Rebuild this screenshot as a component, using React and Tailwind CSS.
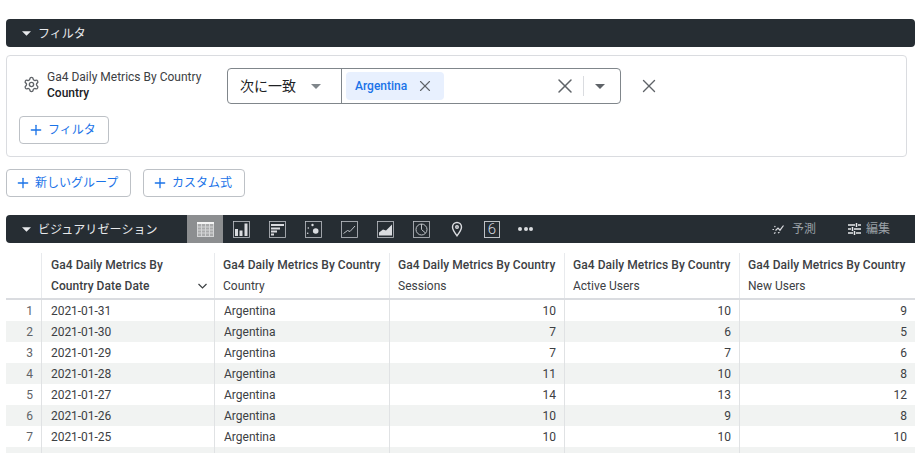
// App.jsx — Explore filter panel and results table.

import { Plus, Settings, X } from 'lucide-react';

const ROWS = [
  ['2021-01-31', 10, 10, 9],
  ['2021-01-30', 7, 6, 5],
  ['2021-01-29', 7, 7, 6],
  ['2021-01-28', 11, 10, 8],
  ['2021-01-27', 14, 13, 12],
  ['2021-01-26', 10, 9, 8],
  ['2021-01-25', 10, 10, 10],
];

const COLUMNS = [
  { title: 'Ga4 Daily Metrics By Country', sub: 'Country' },
  { title: 'Ga4 Daily Metrics By Country', sub: 'Sessions' },
  { title: 'Ga4 Daily Metrics By Country', sub: 'Active Users' },
  { title: 'Ga4 Daily Metrics By Country', sub: 'New Users' },
];

const GRID = 'grid grid-cols-[35px_173px_175px_175px_175px_176px]';

function Caret({ className }) {
  return (
    <svg width="10" height="5" viewBox="0 0 10 5" className={className}>
      <path d="M0 0h10L5 5z" fill="currentColor" />
    </svg>
  );
}

function OutlineButton({ label, className }) {
  return (
    <button className={`flex h-7 items-center rounded border border-[#bdc1c6] bg-white pl-2 text-xs text-[#1a73e8] ${className}`}>
      <Plus size={16} strokeWidth={2} className="mr-1" />
      {label}
    </button>
  );
}

function VisIcon({ children }) {
  return (
    <svg width="17" height="17" viewBox="0 0 17 17" fill="none" stroke="#bdc1c6" className="shrink-0">
      <rect x="0.5" y="0.5" width="16" height="16" strokeWidth="0.8" />
      {children}
    </svg>
  );
}

function Toolbar() {
  return (
    <div className="flex items-center text-[#dadce0]">
      <div className="flex h-7 w-9 items-center justify-center bg-[#8c8e90]">
        <svg width="17" height="15" viewBox="0 0 17 15" fill="none" stroke="#d4d5d6" strokeWidth="1">
          <rect x="0.5" y="0.5" width="16" height="14" fill="#a9aaab" />
          <rect x="0" y="0" width="17" height="2" fill="#f4f4f4" stroke="none" />
          <path d="M0 5h17M0 8h17M0 11h17M4.5 2v13M8.5 2v13M12.5 2v13" />
        </svg>
      </div>
      <div className="ml-[10px] flex items-center gap-[19px]">
        <VisIcon>
          <path d="M3.500 15V8M8 15V9.500M13 15V2.500" stroke="#dadce0" strokeWidth="3" />
        </VisIcon>
        <VisIcon>
          <path d="M2 4h13M2 7.500h9M2 10.500h6M2 13.500h3" stroke="#dadce0" strokeWidth="2" />
        </VisIcon>
        <VisIcon>
          <circle cx="7.500" cy="4" r="1.200" fill="#dadce0" stroke="none" />
          <circle cx="3.300" cy="7" r="0.800" fill="#dadce0" stroke="none" />
          <circle cx="10.700" cy="10" r="2.800" fill="#dadce0" stroke="none" />
          <circle cx="2.700" cy="12.300" r="0.800" fill="#dadce0" stroke="none" />
        </VisIcon>
        <VisIcon>
          <path d="M2.500 12.500l4-3 2.500 1 5-5.500" strokeWidth="1" />
        </VisIcon>
        <VisIcon>
          <path d="M2 14.500v-3l4-3 3 1 6-6v11z" fill="#dadce0" stroke="none" />
        </VisIcon>
        <VisIcon>
          <circle cx="8.500" cy="8.500" r="5.500" strokeWidth="1" />
          <path d="M8.500 3v5.500l4 3.500" strokeWidth="1" />
        </VisIcon>
        <svg width="12" height="16" viewBox="0 0 12 16" fill="none" stroke="#dadce0" strokeWidth="1.400" className="mx-[2px] shrink-0">
          <path d="M6 14.800C3.500 11.500 1.500 9 1.500 6a4.500 4.500 0 0 1 9 0c0 3-2 5.500-4.500 8.800z" />
          <circle cx="6" cy="6" r="1.300" />
        </svg>
        <div className="flex h-[17px] w-[16px] items-center justify-center border border-[#bdc1c6] text-[15px] font-light leading-none">
          6
        </div>
      </div>
      <div className="ml-[18px] flex gap-[1.5px]">
        <span className="size-[4px] rounded-full bg-[#dadce0]" />
        <span className="size-[4px] rounded-full bg-[#dadce0]" />
        <span className="size-[4px] rounded-full bg-[#dadce0]" />
      </div>
    </div>
  );
}

function App() {
  return (
    <div className="h-[453px] w-[919px] overflow-hidden bg-white pt-[19px] pl-[6px] pr-[4px] font-['Roboto','Noto_Sans_CJK_JP',sans-serif] text-[#3c4043]">
      <div className="flex h-7 items-center rounded-sm bg-[#262d33] pl-[16px] text-xs text-[#e8eaed]">
        <Caret className="w-[9px]" />
        <span className="ml-[7px] pt-[2px]">フィルタ</span>
      </div>

      <div className="mt-2 mr-2 h-[102px] rounded-sm border border-[#dadce0] pt-3 pl-3">
        <div className="flex h-[36px]">
          <Settings size={17} strokeWidth={1.9} className="mt-[8px] ml-[4px] text-[#5f6368]" />
          <div className="ml-[7px] w-[180px] pt-[1px] text-xs leading-4">
            <div>Ga4 Daily Metrics By Country</div>
            <div className="font-medium text-[#202124]">Country</div>
          </div>
          <div className="flex h-[36px] w-[394px] rounded border border-[#80868b]">
            <div className="flex w-[114px] items-center border-r border-[#80868b] pl-3 text-sm text-[#202124]">
              次に一致
              <Caret className="ml-[15px] text-[#80868b]" />
            </div>
            <div className="flex flex-1 items-center pl-1">
              <div className="flex h-7 w-[98px] items-center rounded bg-[#e8f0fe] pl-[9px] text-xs font-medium text-[#1a73e8]">
                Argentina
                <X size={18} strokeWidth={1.5} className="ml-[9px] text-[#5f6368]" />
              </div>
              <X size={24} strokeWidth={1.5} className="ml-[109px] text-[#5f6368]" />
              <div className="ml-[6px] h-5 w-px bg-[#dadce0]" />
              <Caret className="ml-[11px] text-[#5f6368]" />
            </div>
          </div>
          <X size={22} strokeWidth={1.5} className="mt-[7px] ml-[17px] text-[#5f6368]" />
        </div>
        <OutlineButton label="フィルタ" className="mt-3 w-[90px]" />
      </div>

      <div className="mt-3 flex gap-[12px]">
        <OutlineButton label="新しいグループ" className="w-[125px]" />
        <OutlineButton label="カスタム式" className="w-[102px]" />
      </div>

      <div className="mt-[18px] flex h-7 items-center rounded-l-sm bg-[#262d33] pl-[16px] text-xs text-[#e8eaed]">
        <Caret className="w-[9px]" />
        <span className="ml-[7px] w-[149px] pt-[2px] tracking-[0.1px]">ビジュアリゼーション</span>
        <Toolbar />
        <div className="ml-auto flex items-center pr-[25px] text-xs text-[#9aa0a6]">
          <svg width="12" height="11" viewBox="0 0 12 11" fill="none" stroke="#dadce0" strokeWidth="1.200">
            <path d="M3.500 6.500L6 4l2 2.200L11.500 1.500" />
            <path d="M0.500 5.500h1.500M2 9.500l1.500-1M6 9l1.500-.8M2.500 2l.8 1.200" />
          </svg>
          <span className="ml-[8px]">予測</span>
          <svg width="13" height="12" viewBox="0 0 13 12" stroke="#e8eaed" strokeWidth="1.500" className="ml-[32px]">
            <path d="M0 2h7M10 2h3M0 6h3M6 6h7M0 10h5M8 10h5M8.500 0v4M4.500 4v4M6.500 8v4" />
          </svg>
          <span className="ml-[5px]">編集</span>
        </div>
      </div>

      <div className={`${GRID} mt-[10px] h-[47px] border-b-2 border-[#dadce0] text-xs`}>
        <div />
        <div className="relative border-l border-[#e8eaed] pt-[2px] pl-[9px] font-medium leading-[21px] tracking-[0.05px] text-[#3c4043]">
          <div>Ga4 Daily Metrics By</div>
          <div>Country Date Date</div>
          <svg width="9" height="6" viewBox="0 0 9 6" fill="none" stroke="#3c4043" strokeWidth="1.200" className="absolute right-[7px] bottom-[9px]">
            <path d="M0.500 1l4 4 4-4" />
          </svg>
        </div>
        {COLUMNS.map((col) => (
          <div key={col.sub} className="border-l border-[#e8eaed] pt-[2px] pl-[8px] leading-[21px]">
            <div className="whitespace-nowrap font-medium tracking-[0.05px]">{col.title}</div>
            <div>{col.sub}</div>
          </div>
        ))}
      </div>

      {ROWS.map((row, i) => (
        <div key={row[0]} className={`${GRID} h-[21px] text-xs leading-[23px] ${i % 2 === 1 ? 'bg-[#f1f3f2]' : 'bg-white'}`}>
          <div className="pr-[8px] text-right text-[#5f6368]">{i + 1}</div>
          <div className="border-l border-[#e0e2e4] pl-[9px] tracking-[-0.05px]">{row[0]}</div>
          <div className="border-l border-[#e0e2e4] pl-[9px]">Argentina</div>
          <div className="border-l border-[#e0e2e4] pr-[8px] text-right">{row[1]}</div>
          <div className="border-l border-[#e0e2e4] pr-[8px] text-right">{row[2]}</div>
          <div className="border-l border-[#e0e2e4] pr-[8px] text-right">{row[3]}</div>
        </div>
      ))}
      <div className={`${GRID} h-[21px] bg-[#f1f3f2]`}>
        <div />
        <div className="border-l border-[#e0e2e4]" />
        <div className="border-l border-[#e0e2e4]" />
        <div className="border-l border-[#e0e2e4]" />
        <div className="border-l border-[#e0e2e4]" />
        <div className="border-l border-[#e0e2e4]" />
      </div>
    </div>
  );
}

export default App;
